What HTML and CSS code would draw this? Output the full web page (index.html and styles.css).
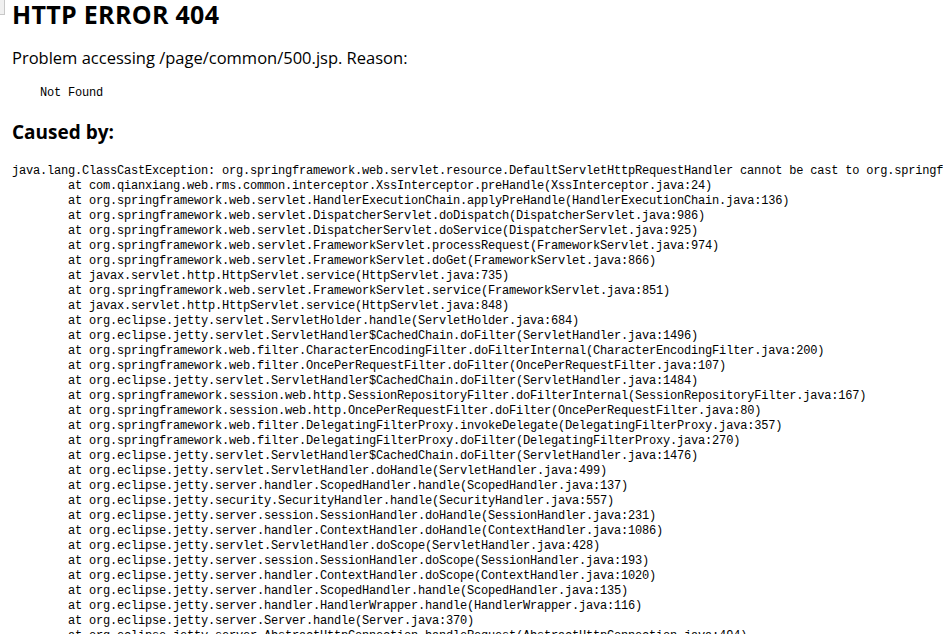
FILE: index.html
```html
<!DOCTYPE html>
<html lang="en">

<head>
    <meta charset="UTF-8">
    <title>Error 404 Not Found</title>
    <link rel="stylesheet" href="styles.css">
</head>

<body>
    <div class="corner-tab"></div>
    <h2 class="error-title">HTTP ERROR 404</h2>
    <p class="problem">Problem accessing /page/common/500.jsp. Reason:</p>
    <pre class="reason">    Not Found</pre>
    <h3 class="caused">Caused by:</h3>
<pre class="trace">java.lang.ClassCastException: org.springframework.web.servlet.resource.DefaultServletHttpRequestHandler cannot be cast to org.springframework.web.method.HandlerMethod
	at com.qianxiang.web.rms.common.interceptor.XssInterceptor.preHandle(XssInterceptor.java:24)
	at org.springframework.web.servlet.HandlerExecutionChain.applyPreHandle(HandlerExecutionChain.java:136)
	at org.springframework.web.servlet.DispatcherServlet.doDispatch(DispatcherServlet.java:986)
	at org.springframework.web.servlet.DispatcherServlet.doService(DispatcherServlet.java:925)
	at org.springframework.web.servlet.FrameworkServlet.processRequest(FrameworkServlet.java:974)
	at org.springframework.web.servlet.FrameworkServlet.doGet(FrameworkServlet.java:866)
	at javax.servlet.http.HttpServlet.service(HttpServlet.java:735)
	at org.springframework.web.servlet.FrameworkServlet.service(FrameworkServlet.java:851)
	at javax.servlet.http.HttpServlet.service(HttpServlet.java:848)
	at org.eclipse.jetty.servlet.ServletHolder.handle(ServletHolder.java:684)
	at org.eclipse.jetty.servlet.ServletHandler$CachedChain.doFilter(ServletHandler.java:1496)
	at org.springframework.web.filter.CharacterEncodingFilter.doFilterInternal(CharacterEncodingFilter.java:200)
	at org.springframework.web.filter.OncePerRequestFilter.doFilter(OncePerRequestFilter.java:107)
	at org.eclipse.jetty.servlet.ServletHandler$CachedChain.doFilter(ServletHandler.java:1484)
	at org.springframework.session.web.http.SessionRepositoryFilter.doFilterInternal(SessionRepositoryFilter.java:167)
	at org.springframework.session.web.http.OncePerRequestFilter.doFilter(OncePerRequestFilter.java:80)
	at org.springframework.web.filter.DelegatingFilterProxy.invokeDelegate(DelegatingFilterProxy.java:357)
	at org.springframework.web.filter.DelegatingFilterProxy.doFilter(DelegatingFilterProxy.java:270)
	at org.eclipse.jetty.servlet.ServletHandler$CachedChain.doFilter(ServletHandler.java:1476)
	at org.eclipse.jetty.servlet.ServletHandler.doHandle(ServletHandler.java:499)
	at org.eclipse.jetty.server.handler.ScopedHandler.handle(ScopedHandler.java:137)
	at org.eclipse.jetty.security.SecurityHandler.handle(SecurityHandler.java:557)
	at org.eclipse.jetty.server.session.SessionHandler.doHandle(SessionHandler.java:231)
	at org.eclipse.jetty.server.handler.ContextHandler.doHandle(ContextHandler.java:1086)
	at org.eclipse.jetty.servlet.ServletHandler.doScope(ServletHandler.java:428)
	at org.eclipse.jetty.server.session.SessionHandler.doScope(SessionHandler.java:193)
	at org.eclipse.jetty.server.handler.ContextHandler.doScope(ContextHandler.java:1020)
	at org.eclipse.jetty.server.handler.ScopedHandler.handle(ScopedHandler.java:135)
	at org.eclipse.jetty.server.handler.HandlerWrapper.handle(HandlerWrapper.java:116)
	at org.eclipse.jetty.server.Server.handle(Server.java:370)
	at org.eclipse.jetty.server.AbstractHttpConnection.handleRequest(AbstractHttpConnection.java:494)
	at org.eclipse.jetty.server.AbstractHttpConnection.headerComplete(AbstractHttpConnection.java:971)
</pre>
</body>

</html>
```

FILE: styles.css
```css
html,
body {
    overflow: hidden;
}

body {
    margin: 0;
    padding: 0 12px;
    background-color: #fff;
    color: #000;
    font-family: "Open Sans", "Noto Sans", sans-serif;
}

/* bit of a neighbouring window peeking in at the top left */
.corner-tab {
    position: absolute;
    top: 0;
    left: 0;
    width: 4px;
    height: 14px;
    background-color: #f0f0f0;
    border-right: 1px solid #c8c8c8;
    border-bottom: 1px solid #c8c8c8;
}

.error-title {
    margin: 0;
    font-size: 25px;
    font-weight: 700;
    line-height: 29px;
    letter-spacing: 0.3px;
}

.problem {
    margin: 18px 0 0;
    font-size: 16.5px;
    line-height: 22px;
}

.reason,
.trace {
    font-family: "Liberation Mono", "DejaVu Sans Mono", monospace;
    font-size: 12px;
    letter-spacing: -0.2px;
    line-height: 15px;
    tab-size: 8;
    white-space: pre;
}

.reason {
    margin: 17px 0 0;
}

.caused {
    margin: 18px 0 0;
    font-size: 19px;
    font-weight: 700;
    line-height: 26px;
}

.trace {
    margin: 19px 0 0;
}
```
